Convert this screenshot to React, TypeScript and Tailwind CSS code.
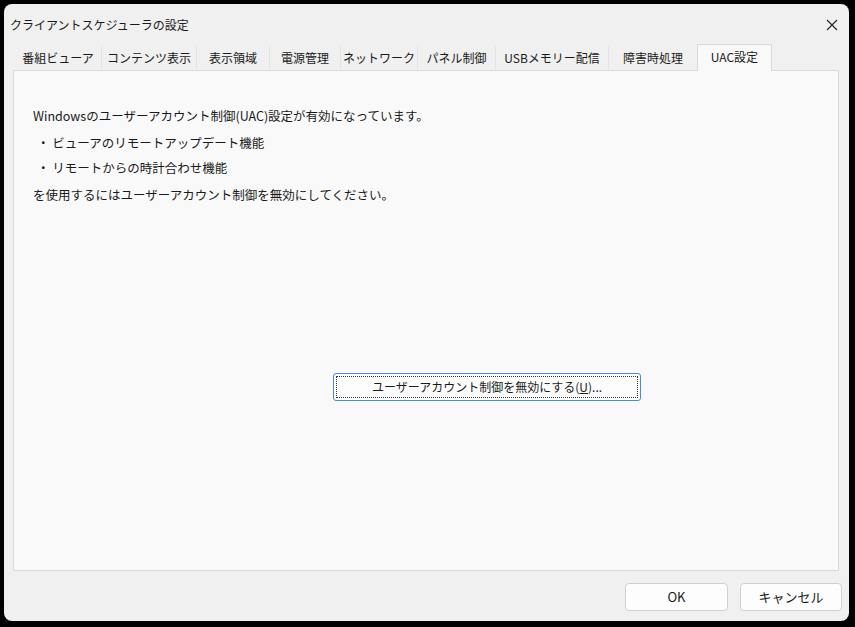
const tabs = [
  { label: "番組ビューア", w: "w-[86px]" },
  { label: "コンテンツ表示", w: "w-[95px]" },
  { label: "表示領域", w: "w-[73px]" },
  { label: "電源管理", w: "w-[71px]" },
  { label: "ネットワーク", w: "w-[77px]" },
  { label: "パネル制御", w: "w-[78px]" },
  { label: "USBメモリー配信", w: "w-[113px]" },
  { label: "障害時処理", w: "w-[89px]" },
]

export default function App() {
  return (
    <div
      className="w-[855px] h-[627px] bg-black pt-[4px] pl-[4px] pr-[6px] pb-[6px] text-[#1a1a1a]"
      style={{ fontFamily: '"Noto Sans CJK JP", "Noto Sans", sans-serif' }}
    >
      <div className="w-full h-full bg-[#f0f0f0] rounded-[8px] flex flex-col overflow-hidden">
        {/* title bar */}
        <div className="h-[41px] flex items-center pl-[6px] pr-[11px] shrink-0">
          <span className="text-[12px] leading-none">クライアントスケジューラの設定</span>
          <div className="ml-auto w-[12px] h-[12px] flex items-center justify-center">
            <svg width="12" height="12" viewBox="0 0 12 12">
              <path d="M1 1L11 11M11 1L1 11" stroke="#222" strokeWidth="1.1" />
            </svg>
          </div>
        </div>

        <div className="px-[9px] flex flex-col flex-1">
          {/* tabs */}
          <div className="flex items-end h-[25px] pl-[2px] relative z-10">
            {tabs.map((t) => (
              <div
                key={t.label}
                className={`${t.w} h-[24px] flex items-center justify-center text-[12px] bg-[#f0f0f0] border-l border-[#e4e4e4] first:border-l-0`}
              >
                {t.label}
              </div>
            ))}
            <div className="w-[75px] h-[27px] -mb-[1px] flex items-center justify-center text-[12px] bg-[#f9f9f9] border border-b-0 border-[#d9d9d9] pb-[2px]">
              UAC設定
            </div>
          </div>

          {/* panel */}
          <div className="h-[501px] w-[826px] bg-[#f9f9f9] border border-[#d9d9d9] flex flex-col">
            <div className="pl-[19px] pt-[39px] text-[12.5px] leading-none flex flex-col">
              <div className="h-[27px]">Windowsのユーザーアカウント制御(UAC)設定が有効になっています。</div>
              <div className="h-[25px] pl-[4px]">・ ビューアのリモートアップデート機能</div>
              <div className="h-[27px] pl-[4px]">・ リモートからの時計合わせ機能</div>
              <div>を使用するにはユーザーアカウント制御を無効にしてください。</div>
            </div>

            <div className="flex pl-[319px] pt-[171px]">
              <button className="w-[308px] h-[28px] rounded-[3px] border border-[#4a8ad4] bg-[#fdfdfd] p-[2px]">
                <div className="w-full h-full border border-dotted border-[#333] flex items-center justify-center text-[12px] leading-none">
                  ユーザーアカウント制御を無効にする(<span className="underline">U</span>)...
                </div>
              </button>
            </div>
          </div>

          {/* footer */}
          <div className="flex justify-end gap-[12px] pt-[12px] mr-[-2px]">
            <button className="w-[103px] h-[28px] rounded-[4px] border border-[#d0d0d0] bg-[#fdfdfd] text-[13px] flex items-center justify-center">
              OK
            </button>
            <button className="w-[102px] h-[28px] rounded-[4px] border border-[#d0d0d0] bg-[#fdfdfd] text-[13px] flex items-center justify-center">
              キャンセル
            </button>
          </div>
        </div>
      </div>
    </div>
  )
}
